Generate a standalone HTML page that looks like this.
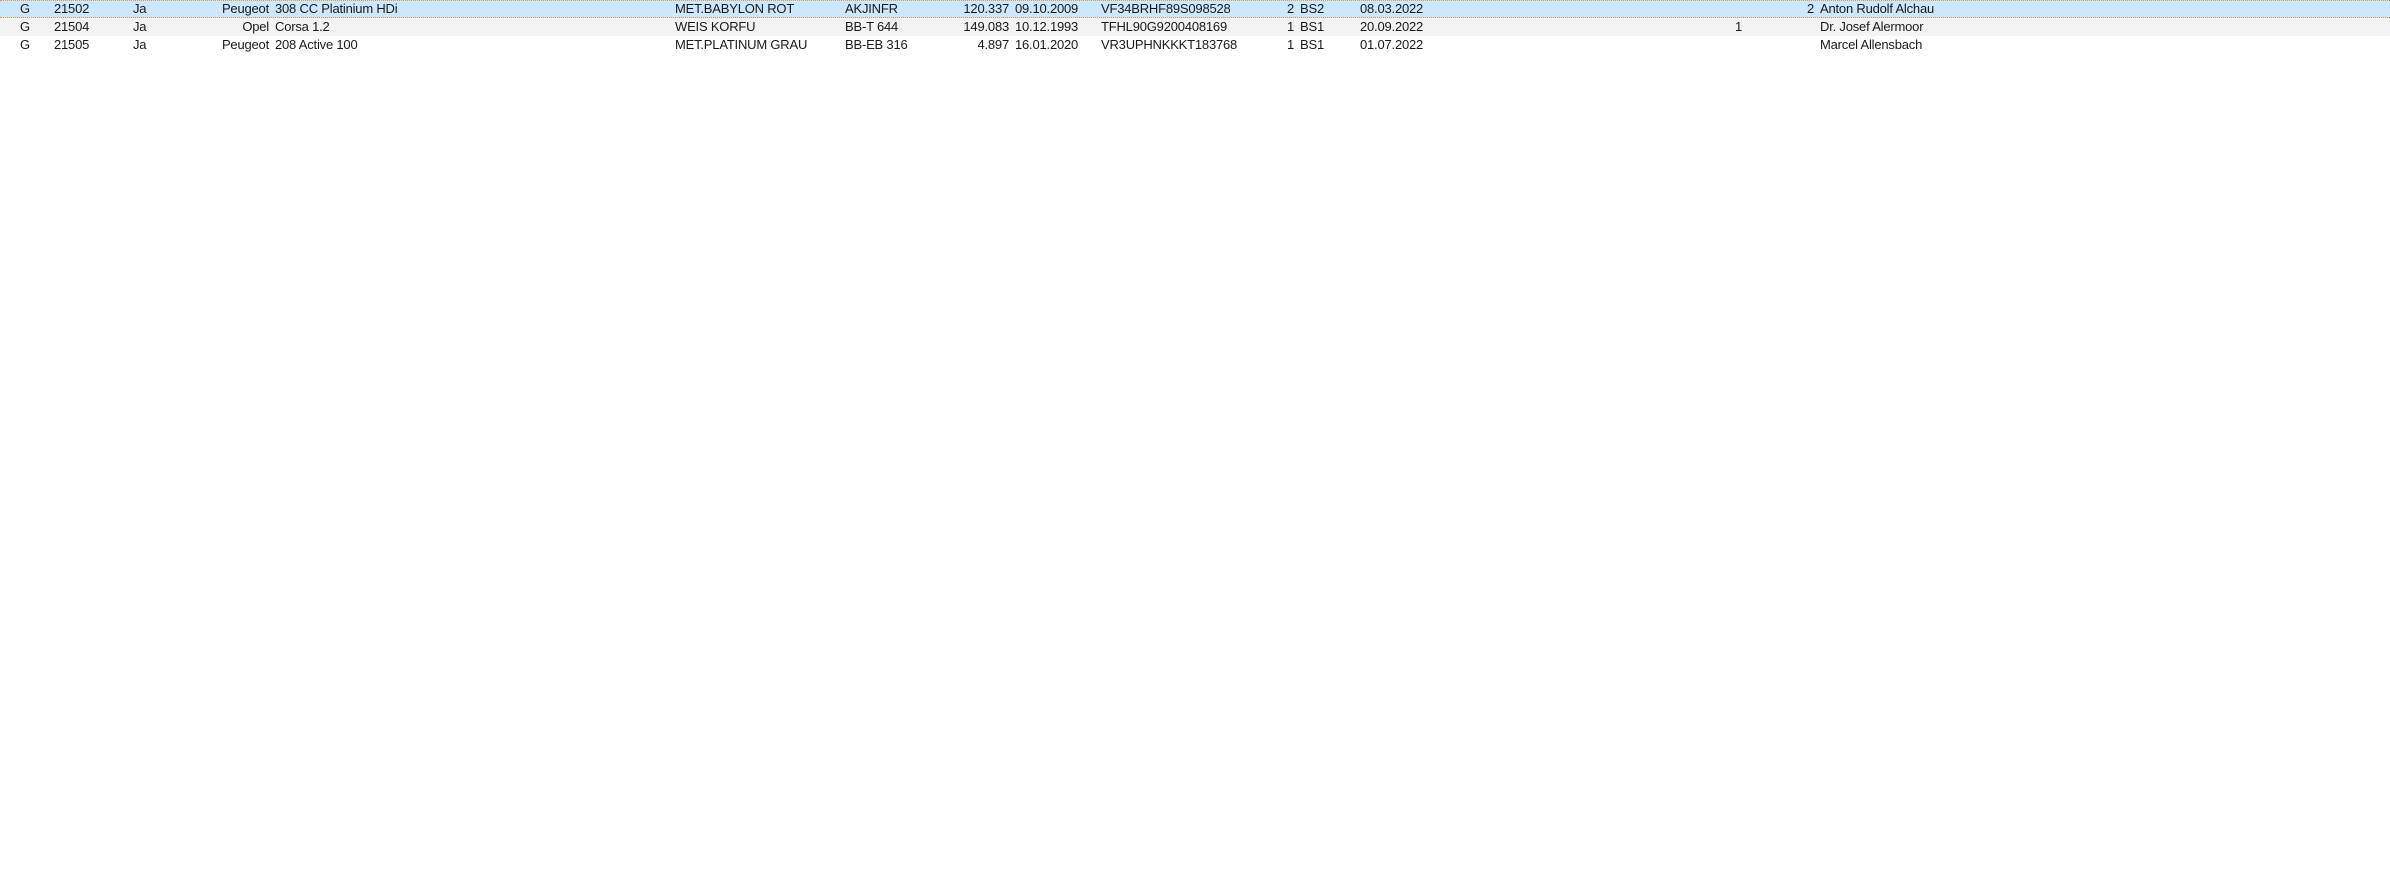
<!DOCTYPE html>
<html><head><meta charset="utf-8"><style>
body{margin:0;width:2390px;height:885px;background:#fff;font-family:"Liberation Sans",sans-serif;font-size:13px;color:#1a1a1a;position:relative;overflow:hidden}
.r{position:absolute;left:0;width:2390px;height:18px}
.r span{position:absolute;top:2px;white-space:nowrap;line-height:14px;letter-spacing:-0.2px}
</style></head><body>
<div class="r" style="top:0;background:#cce8ff;border-top:1px dotted #e8903c;border-bottom:1px dotted #e8903c;height:16px;box-sizing:content-box">
<span style="left:20px;top:1px">G</span><span style="left:54px;top:1px">21502</span><span style="left:133px;top:1px">Ja</span>
<span style="right:2121px;top:1px">Peugeot</span><span style="left:275px;top:1px">308 CC Platinium HDi</span>
<span style="left:675px;top:1px">MET.BABYLON ROT</span><span style="left:845px;top:1px">AKJINFR</span>
<span style="right:1381px;top:1px">120.337</span><span style="left:1015px;top:1px">09.10.2009</span>
<span style="left:1101px;top:1px">VF34BRHF89S098528</span><span style="right:1096px;top:1px">2</span><span style="left:1300px;top:1px">BS2</span>
<span style="left:1360px;top:1px">08.03.2022</span><span style="right:576px;top:1px">2</span><span style="left:1820px;top:1px">Anton Rudolf Alchau</span>
</div>
<div class="r" style="top:18px;background:#f3f3f3">
<span style="left:20px">G</span><span style="left:54px">21504</span><span style="left:133px">Ja</span>
<span style="right:2121px">Opel</span><span style="left:275px">Corsa 1.2</span>
<span style="left:675px">WEIS KORFU</span><span style="left:845px">BB-T 644</span>
<span style="right:1381px">149.083</span><span style="left:1015px">10.12.1993</span>
<span style="left:1101px">TFHL90G9200408169</span><span style="right:1096px">1</span><span style="left:1300px">BS1</span>
<span style="left:1360px">20.09.2022</span><span style="right:648px">1</span><span style="left:1820px">Dr. Josef Alermoor</span>
</div>
<div class="r" style="top:36px">
<span style="left:20px">G</span><span style="left:54px">21505</span><span style="left:133px">Ja</span>
<span style="right:2121px">Peugeot</span><span style="left:275px">208 Active 100</span>
<span style="left:675px">MET.PLATINUM GRAU</span><span style="left:845px">BB-EB 316</span>
<span style="right:1381px">4.897</span><span style="left:1015px">16.01.2020</span>
<span style="left:1101px">VR3UPHNKKKT183768</span><span style="right:1096px">1</span><span style="left:1300px">BS1</span>
<span style="left:1360px">01.07.2022</span><span style="left:1820px">Marcel Allensbach</span>
</div>
</body></html>
